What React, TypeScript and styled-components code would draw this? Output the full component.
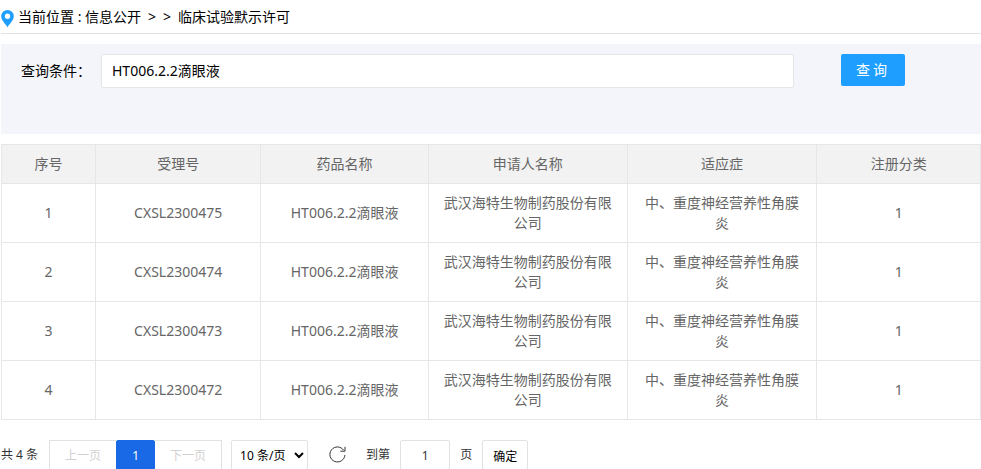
import React, { useState } from "react";
import styled, { createGlobalStyle } from "styled-components";

const GlobalStyle = createGlobalStyle`
  *, *::before, *::after { box-sizing: border-box; }
  body {
    margin: 0;
    background: #fff;
    color: #000;
    font: 14px/20px "Noto Sans", "Noto Sans CJK SC", sans-serif;
  }
  button, input, select { font-family: inherit; margin: 0; }
`;

const Page = styled.div`
  padding-left: 1px;
`;

const Breadcrumb = styled.nav`
  display: flex;
  align-items: center;
  gap: 4px;
  height: 34px;
  border-bottom: 1px solid #e2e2e2;
`;

const PinIcon = styled.svg`
  width: 13px;
  height: 18px;
  margin-top: 4px;
`;

const Trail = styled.span`
  display: flex;
  gap: 7px;
`;

const CrumbLink = styled.a`
  color: inherit;
  text-decoration: none;
`;

const SearchForm = styled.form`
  display: flex;
  align-items: flex-start;
  height: 90px;
  margin: 10px 0;
  padding: 10px 76px 0 20px;
  background: #f4f5fa;
`;

const SearchLabel = styled.label`
  width: 80px;
  line-height: 34px;
`;

const SearchInput = styled.input`
  flex: 1;
  min-width: 0;
  height: 34px;
  margin-right: 47px;
  padding: 0 10px 2px;
  border: 1px solid #e6e6e6;
  border-radius: 2px;
  background: #fff;
  color: #000;
  font-size: 14px;
`;

const SearchButton = styled.button`
  width: 64px;
  height: 32px;
  padding: 0 0 2px;
  border: 0;
  border-radius: 2px;
  background: #1e9fff;
  color: #fff;
  font-size: 14px;
  letter-spacing: 3px;
`;

const Table = styled.table`
  width: 100%;
  border-collapse: collapse;
  table-layout: fixed;
  color: #666;
  text-align: center;
`;

const Column = styled.col<{ $share: number }>`
  width: ${({ $share }) => $share}%;
`;

const HeadCell = styled.th`
  padding: 9px 14px;
  border: 1px solid #e6e6e6;
  background: #f2f2f2;
  font-weight: 400;
`;

const Cell = styled.td`
  padding: 9px 14px;
  border: 1px solid #e6e6e6;
`;

const Pager = styled.nav`
  display: flex;
  align-items: center;
  height: 30px;
  margin-top: 20px;
  color: #333;
  font-size: 12px;
`;

const PageGroup = styled.div`
  display: flex;
  margin: 0 9px 0 11px;
`;

const PageButton = styled.button<{ $current?: boolean }>`
  width: ${({ $current }) => ($current ? "39px" : "67px")};
  height: 30px;
  padding: 0;
  border: 1px solid ${({ $current }) => ($current ? "#1969e6" : "#e2e2e2")};
  border-radius: ${({ $current }) => ($current ? "2px" : "0")};
  background: ${({ $current }) => ($current ? "#1969e6" : "#fff")};
  color: ${({ $current }) => ($current ? "#fff" : "#d2d2d2")};
  font-size: 12px;
  &:first-child { border-right: 0; }
  &:last-child { border-left: 0; }
`;

const SizeSelect = styled.select`
  width: 77px;
  height: 30px;
  padding: 0 0 0 4px;
  border: 1px solid #e2e2e2;
  border-radius: 2px;
  background: #fff;
  color: #000;
  font-size: 12px;
`;

const RefreshButton = styled.button`
  display: flex;
  margin: 0 20px 2px 21px;
  padding: 0;
  border: 0;
  background: none;
  color: #333;
`;

const JumpLabel = styled.label`
  display: flex;
  align-items: center;
  gap: 10px;
`;

const JumpInput = styled.input`
  width: 50px;
  height: 30px;
  padding: 0;
  border: 1px solid #e2e2e2;
  border-radius: 2px;
  color: #333;
  font-size: 12px;
  text-align: center;
`;

const ConfirmButton = styled.button`
  width: 46px;
  height: 30px;
  margin-left: 10px;
  padding: 2px 0 0;
  border: 1px solid #e2e2e2;
  border-radius: 2px;
  background: #fff;
  color: #000;
  font-size: 12px;
`;

const columns = [
  { title: "序号", share: 9.6 },
  { title: "受理号", share: 16.9 },
  { title: "药品名称", share: 17.1 },
  { title: "申请人名称", share: 20.3 },
  { title: "适应症", share: 19.4 },
  { title: "注册分类", share: 16.7 },
];

const rows = ["CXSL2300475", "CXSL2300474", "CXSL2300473", "CXSL2300472"].map((id, i) => [
  String(i + 1),
  id,
  "HT006.2.2滴眼液",
  "武汉海特生物制药股份有限公司",
  "中、重度神经营养性角膜炎",
  "1",
]);

export default function App() {
  const [query, setQuery] = useState("HT006.2.2滴眼液");
  const [page, setPage] = useState("1");

  return (
    <Page>
      <GlobalStyle />
      <Breadcrumb aria-label="当前位置">
        <PinIcon viewBox="0 0 13 18" aria-hidden="true">
          <path
            fill="#1e9fff"
            fillRule="evenodd"
            d="M6.5 0A6.3 6.3 0 0 0 .2 6.3C.2 10.3 4.2 13.6 6.5 17.2 8.8 13.6 12.8 10.3 12.8 6.3A6.3 6.3 0 0 0 6.5 0ZM6.5 3.5a2.7 2.7 0 1 1 0 5.4 2.7 2.7 0 0 1 0-5.4Z"
          />
        </PinIcon>
        <Trail>
          <span>当前位置 : <CrumbLink href="#">信息公开</CrumbLink></span>
          <span>&gt;</span>
          <span>&gt;</span>
          <span>临床试验默示许可</span>
        </Trail>
      </Breadcrumb>

      <SearchForm onSubmit={(e) => e.preventDefault()}>
        <SearchLabel htmlFor="query">查询条件：</SearchLabel>
        <SearchInput id="query" value={query} onChange={(e) => setQuery(e.target.value)} />
        <SearchButton type="submit">查询</SearchButton>
      </SearchForm>

      <Table>
        <colgroup>
          {columns.map((c) => <Column key={c.title} $share={c.share} />)}
        </colgroup>
        <thead>
          <tr>{columns.map((c) => <HeadCell key={c.title} scope="col">{c.title}</HeadCell>)}</tr>
        </thead>
        <tbody>
          {rows.map((row) => (
            <tr key={row[1]}>{row.map((text, i) => <Cell key={i}>{text}</Cell>)}</tr>
          ))}
        </tbody>
      </Table>

      <Pager aria-label="分页">
        <span>共 4 条</span>
        <PageGroup>
          <PageButton type="button" disabled>上一页</PageButton>
          <PageButton type="button" $current aria-current="page">1</PageButton>
          <PageButton type="button" disabled>下一页</PageButton>
        </PageGroup>
        <SizeSelect aria-label="每页条数" defaultValue="10">
          <option value="10">10 条/页</option>
          <option value="20">20 条/页</option>
          <option value="50">50 条/页</option>
        </SizeSelect>
        <RefreshButton type="button" aria-label="刷新">
          <svg width="17" height="17" viewBox="0 0 17 17" fill="none" stroke="currentColor" aria-hidden="true">
            <path d="M15.9 9A7.5 7.5 0 1 1 14.6 4.2" />
            <path d="M16 .8V5.2H11.4" />
          </svg>
        </RefreshButton>
        <JumpLabel>
          到第
          <JumpInput value={page} onChange={(e) => setPage(e.target.value)} />
          页
        </JumpLabel>
        <ConfirmButton type="button">确定</ConfirmButton>
      </Pager>
    </Page>
  );
}
